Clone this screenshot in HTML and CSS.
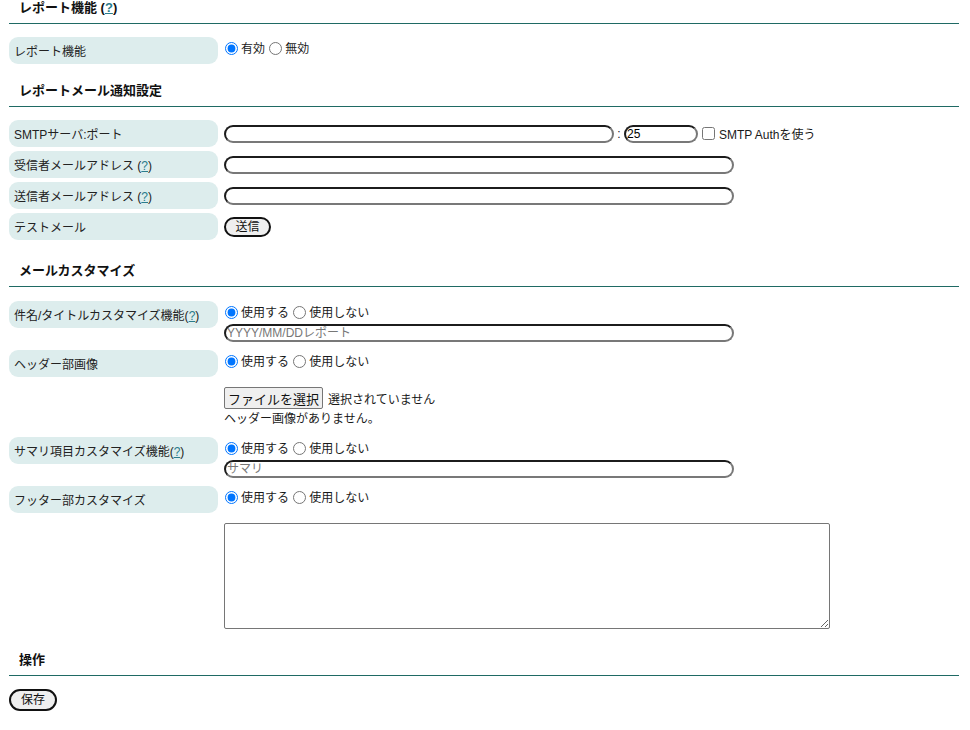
FILE: index.html
```html
<!DOCTYPE html>
<html lang="ja">
<head>
<meta charset="utf-8">
<title>レポート機能</title>
<link rel="stylesheet" href="styles.css">
</head>
<body>
<div class="page">
  <h2 class="head first">レポート機能 (<a href="#" class="help">?</a>)</h2>
  <div class="rows">
    <div class="row">
      <div class="label">レポート機能</div>
      <div class="cell">
        <div class="radios"><input type="radio" name="r1" checked>有効 <input type="radio" name="r1">無効</div>
      </div>
    </div>
  </div>

  <h2 class="head">レポートメール通知設定</h2>
  <div class="rows">
    <div class="row">
      <div class="label">SMTPサーバ:ポート</div>
      <div class="cell mid">
        <input type="text" class="txt host"><span class="colon">:</span><input type="text" class="txt port" value="25"><input type="checkbox" class="chk"><span>SMTP Authを使う</span>
      </div>
    </div>
    <div class="row">
      <div class="label">受信者メールアドレス (<a href="#" class="help">?</a>)</div>
      <div class="cell mid"><input type="text" class="txt wide"></div>
    </div>
    <div class="row">
      <div class="label">送信者メールアドレス (<a href="#" class="help">?</a>)</div>
      <div class="cell mid"><input type="text" class="txt wide"></div>
    </div>
    <div class="row">
      <div class="label">テストメール</div>
      <div class="cell mid"><button type="button" class="pill">送信</button></div>
    </div>
  </div>

  <h2 class="head wide-gap">メールカスタマイズ</h2>
  <div class="rows s3">
    <div class="row">
      <div class="label">件名/タイトルカスタマイズ機能(<a href="#" class="help">?</a>)</div>
      <div class="cell">
        <div class="radios"><input type="radio" name="r2" checked>使用する <input type="radio" name="r2">使用しない</div>
        <input type="text" class="txt wide block" placeholder="YYYY/MM/DDレポート">
      </div>
    </div>
    <div class="row">
      <div class="label">ヘッダー部画像</div>
      <div class="cell">
        <div class="radios"><input type="radio" name="r3" checked>使用する <input type="radio" name="r3">使用しない</div>
        <div class="file"><button type="button" class="filebtn">ファイルを選択</button><span>選択されていません</span></div>
        <div class="note">ヘッダー画像がありません。</div>
      </div>
    </div>
    <div class="row">
      <div class="label">サマリ項目カスタマイズ機能(<a href="#" class="help">?</a>)</div>
      <div class="cell">
        <div class="radios"><input type="radio" name="r4" checked>使用する <input type="radio" name="r4">使用しない</div>
        <input type="text" class="txt wide block" placeholder="サマリ">
      </div>
    </div>
    <div class="row">
      <div class="label">フッター部カスタマイズ</div>
      <div class="cell">
        <div class="radios"><input type="radio" name="r5" checked>使用する <input type="radio" name="r5">使用しない</div>
        <textarea class="area"></textarea>
      </div>
    </div>
  </div>

  <h2 class="head">操作</h2>
  <div class="actions"><button type="button" class="pill save">保存</button></div>
</div>
</body>
</html>
```

FILE: styles.css
```css
html, body {
  margin: 0;
  padding: 0;
  background: #fff;
}
body {
  font-family: "Liberation Sans", "Noto Sans CJK JP", sans-serif;
  font-size: 12px;
  color: #1a1a1a;
}
.page {
  padding: 0 11px 0 9px;
}
.head {
  margin: 19px 0 0;
  padding: 0 10px 7px;
  font-size: 13px;
  line-height: 16px;
  font-weight: bold;
  color: #111;
  border-bottom: 1px solid #1f6a64;
}
.head.first {
  margin-top: 0;
}
.head.wide-gap {
  margin-top: 23px;
}
.help {
  color: #2a7c8c;
  text-decoration: underline;
}
.rows {
  display: flex;
  flex-direction: column;
  gap: 4px;
  padding-top: 13px;
}
.rows.s3 {
  padding-top: 14px;
}
.row {
  display: grid;
  grid-template-columns: 209px 1fr;
  column-gap: 6px;
  align-items: start;
}
.label {
  box-sizing: border-box;
  height: 27px;
  padding: 2px 0 0 5px;
  line-height: 26px;
  background: #ddeded;
  border-radius: 9px;
  white-space: nowrap;
  color: #222;
}
.cell {
  padding: 2px 0 4px;
  min-height: 21px;
}
.cell.mid {
  display: flex;
  align-items: center;
  height: 27px;
  min-height: 0;
  padding: 0;
  box-sizing: border-box;
  white-space: nowrap;
}
.radios {
  line-height: 20px;
  height: 20px;
  white-space: nowrap;
}
.radios input {
  width: 13px;
  height: 13px;
  margin: 0 3px 0 1px;
  vertical-align: -2px;
}
.txt {
  box-sizing: border-box;
  height: 18px;
  margin: 0;
  padding: 0 1px;
  border: 2px solid;
  border-color: #1c1c1c #787878 #787878 #1c1c1c;
  border-radius: 9px;
  background: #fff;
  font-family: "Liberation Sans", "Noto Sans CJK JP", sans-serif;
  font-size: 12px;
  color: #000;
  outline: none;
}
.txt::placeholder {
  color: #777;
}
.host {
  width: 390px;
}
.port {
  width: 74px;
}
.wide {
  width: 510px;
}
.block {
  display: block;
  margin-top: 1px;
}
.colon {
  width: 10px;
  text-align: center;
}
.chk {
  width: 13px;
  height: 13px;
  margin: 0 4px 0 4px;
}
.pill {
  box-sizing: border-box;
  height: 20px;
  width: 47px;
  margin: 0;
  padding: 0;
  border: 2px solid #111;
  border-radius: 10px;
  background: #efefef;
  font-family: "Liberation Sans", "Noto Sans CJK JP", sans-serif;
  font-size: 12px;
  line-height: 14px;
  color: #111;
}
.pill.save {
  height: 22px;
  width: 48px;
  border-radius: 11px;
}
.file {
  margin-top: 15px;
  height: 22px;
  display: flex;
  align-items: center;
  white-space: nowrap;
}
.filebtn {
  box-sizing: border-box;
  height: 22px;
  width: 99px;
  margin: 0 5px 0 0;
  padding: 0;
  border: 1px solid #767676;
  border-radius: 2px;
  background: #efefef;
  font-family: "Liberation Sans", "Noto Sans CJK JP", sans-serif;
  font-size: 13px;
  color: #111;
}
.note {
  line-height: 20px;
}
.area {
  display: block;
  box-sizing: border-box;
  width: 606px;
  height: 106px;
  margin: 15px 0 0;
  border: 1px solid #767676;
  border-radius: 2px;
  font-family: "Liberation Mono", monospace;
}
.actions {
  padding-top: 13px;
}
```
